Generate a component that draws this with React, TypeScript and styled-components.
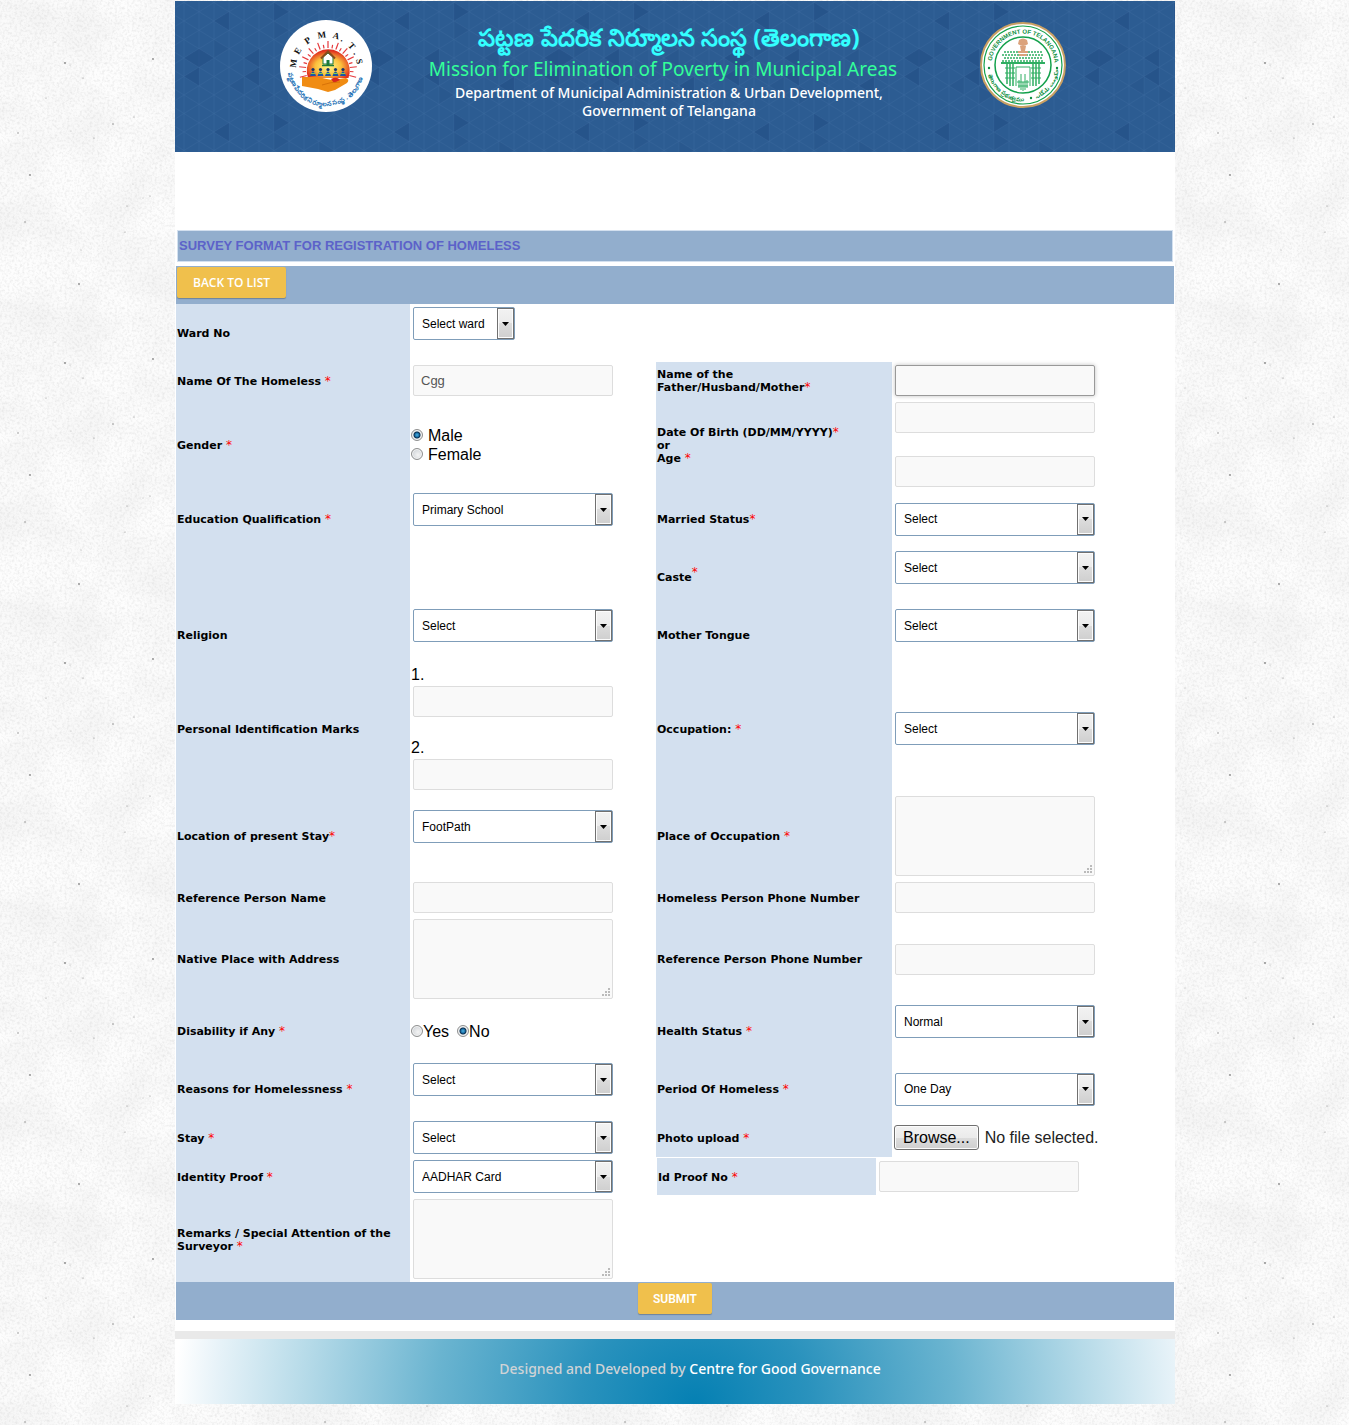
import React, { useRef, useState } from 'react';
import styled, { createGlobalStyle, css } from 'styled-components';

const svgUrl = (svg: string) => `url("data:image/svg+xml,${encodeURIComponent(svg)}")`;

const specks = [
  [65, 63], [70, 65], [83, 78], [18, 133], [94, 138], [71, 131], [30, 175], [133, 184], [127, 206],
  [25, 222], [125, 232], [81, 250], [79, 284], [140, 18], [134, 117], [113, 124], [46, 98], [55, 42],
  [153, 59], [143, 198], [150, 196], [215, 40], [240, 110], [262, 175], [228, 236], [285, 88], [205, 150],
];

const plaster = svgUrl(
  `<svg xmlns="http://www.w3.org/2000/svg" width="300" height="300">
    <filter id="a" x="0" y="0" width="100%" height="100%"><feTurbulence type="fractalNoise" baseFrequency=".02" numOctaves="5" seed="8" stitchTiles="stitch"/><feColorMatrix values="0 0 0 0 .5  0 0 0 0 .5  0 0 0 0 .5  .25 0 0 0 -.08"/></filter>
    <filter id="b" x="0" y="0" width="100%" height="100%"><feTurbulence type="fractalNoise" baseFrequency=".4" numOctaves="3" seed="3" stitchTiles="stitch"/><feColorMatrix values="0 0 0 0 .45  0 0 0 0 .45  0 0 0 0 .45  .5 0 0 0 -.21"/></filter>
    <rect width="300" height="300" fill="#fdfdfd"/>
    <rect width="300" height="300" filter="url(#a)"/>
    <rect width="300" height="300" filter="url(#b)"/>
    ${specks.map(([x, y], i) => `<circle cx="${x}" cy="${y}" r="${i % 3 ? 0.6 : 0.9}" fill="#555" opacity="${i % 2 ? 0.4 : 0.7}"/>`).join('')}
  </svg>`,
);

const GlobalStyle = createGlobalStyle`
  *, *::before, *::after { box-sizing: border-box; }
  body {
    margin: 0;
    padding-left: 1px;
    background: #f6f6f6 ${plaster};
    font: 16px/19px "Liberation Sans", Arial, sans-serif;
    color: #000;
  }
`;

const leftTriangle = (x: number, y: number) => `M${x} ${y}l15 -9.250v18.500z`;
const rightTriangle = (x: number, y: number) => `M${x} ${y}l-15 -9.250v18.500z`;

const triangles = svgUrl(
  `<svg xmlns="http://www.w3.org/2000/svg" width="180" height="111">
    <g fill="none" stroke="#3a689d" stroke-opacity=".45">
      ${Array.from({ length: 12 }, (_, i) => `<path d="M${9 + i * 15} 0V111"/>`).join('')}
      ${Array.from({ length: 21 }, (_, i) => {
        const y = 57 + (i - 10) * 18.5;
        return `<path d="M-6 ${y - 9.25}L189 ${y + 111}M-6 ${y + 9.25}L189 ${y - 111}"/>`;
      }).join('')}
    </g>
    <g fill="#1f4a80" fill-opacity=".45">
      <path d="${leftTriangle(9, 57)}${rightTriangle(39, 57)}${leftTriangle(9, 75.5)}${leftTriangle(39, 20)}${leftTriangle(69, 57)}${leftTriangle(69, 75.5)}${rightTriangle(114, 10.75)}${leftTriangle(144, 84.75)}"/>
    </g>
    <g fill="#1f4a80" fill-opacity=".22">
      <path d="${leftTriangle(54, 84.75)}${rightTriangle(54, 47.75)}${rightTriangle(114, 29.25)}${leftTriangle(129, 57)}${rightTriangle(159, 38.5)}${rightTriangle(99, 94)}"/>
    </g>
  </svg>`,
);

const Page = styled.div`
  max-width: 1000px;
  margin: 0 auto;
  padding: 1px 0 21px;
`;

const Banner = styled.header`
  display: grid;
  grid-template-columns: 302px minmax(0, 1fr) 302px;
  justify-items: center;
  align-items: start;
  height: 151px;
  padding-top: 19px;
  background: #2c5c92 ${triangles};
`;

const Headings = styled.div`
  display: flex;
  flex-direction: column;
  align-items: center;
  margin-right: 24px;
  white-space: nowrap;
  font-family: "Noto Sans", "Open Sans", sans-serif;
`;

const TeluguName = styled.h1`
  margin: 0 0 0 12px;
  font-size: 24px;
  line-height: 34px;
  font-weight: 700;
  color: #3ff;
`;

const EnglishName = styled.h2`
  margin: 0;
  font-size: 19px;
  line-height: 30px;
  font-weight: 400;
  color: #33ff99;
`;

const Department = styled.p`
  margin: 0 0 0 12px;
  font-size: 14px;
  line-height: 18px;
  font-weight: 500;
  text-align: center;
  color: #fff;
`;

const Sheet = styled.main`
  padding: 78px 1px 11px;
  background: #fff;
`;

const Title = styled.h3`
  margin: 0 1px 4px;
  padding: 0 1px;
  border: 1px solid #d3e0ef;
  background: #92aecd;
  font-size: 13px;
  line-height: 30px;
  font-weight: 700;
  color: #5c62c9;
`;

const Bar = styled.div<{ $center?: boolean }>`
  display: flex;
  justify-content: ${(p) => (p.$center ? 'center' : 'flex-start')};
  align-items: flex-start;
  height: 38px;
  padding: 1px;
  background: #92aecd;
`;

const ActionButton = styled.button<{ $wide?: boolean }>`
  height: 31px;
  padding: 1px ${(p) => (p.$wide ? 16 : 15)}px 0;
  border: 0;
  border-radius: 2px;
  background: #f0c04c;
  box-shadow: 0 1px 1px rgba(0, 0, 0, 0.25);
  font: 12px/30px ${(p) => (p.$wide ? '"Open Sans"' : 'Roboto')}, sans-serif;
  font-weight: 600;
  color: #fff;
`;

const FormGrid = styled.div`
  display: grid;
  grid-template-columns: minmax(0, 234fr) minmax(0, 246fr) minmax(0, 236fr) minmax(0, 282fr);
`;

const LabelCell = styled.div`
  display: flex;
  align-items: center;
  padding: 2px 1px 1px;
  background: #d3e0ef;
  font: 700 11px/13px "DejaVu Sans", Verdana, sans-serif;
`;

const ControlCell = styled.div<{ $spaced?: boolean }>`
  display: flex;
  flex-direction: column;
  justify-content: center;
  align-items: flex-start;
  padding: 1px 1px ${(p) => (p.$spaced ? 20 : 1)}px;
`;

const Star = styled.span<{ $raised?: boolean }>`
  font-size: 12px;
  line-height: 0;
  font-weight: 400;
  color: #f00;
  ${(p) => p.$raised && css`vertical-align: super;`}
`;

const field = css`
  display: block;
  width: 200px;
  margin: 2px;
  border: 1px solid #ddd;
  border-radius: 2px;
  background: #f9f9f9;
  font: 13px/18px "Liberation Sans", Arial, sans-serif;
  color: #555;
  outline: 0;
`;

const TextInput = styled.input<{ $active?: boolean }>`
  ${field}
  height: 31px;
  padding: 0 7px;
  ${(p) => p.$active && css`
    border-color: #999;
    box-shadow: 0 0 4px rgba(0, 0, 0, 0.25);
  `}
`;

const TextArea = styled.textarea`
  ${field}
  height: 80px;
  padding: 7px;
  resize: none;
`;

const AreaBox = styled.div`
  display: grid;
  svg {
    grid-area: 1 / 1;
    place-self: end;
    margin: 5px;
    pointer-events: none;
  }
  textarea { grid-area: 1 / 1; }
`;

const SelectBox = styled.div<{ $short?: boolean }>`
  display: grid;
  width: ${(p) => (p.$short ? 102 : 200)}px;
  height: 33px;
  margin: 2px;
`;

const NativeSelect = styled.select`
  grid-area: 1 / 1;
  appearance: none;
  margin: 0;
  padding: 0 20px 0 8px;
  border: 1px solid #7f9db9;
  border-radius: 2px;
  background: #fff;
  font: 12px/18px "Liberation Sans", Arial, sans-serif;
  color: #000;
  outline: 0;
`;

const Arrow = styled.span`
  grid-area: 1 / 1;
  place-self: stretch end;
  display: grid;
  place-items: center;
  width: 17px;
  margin: 1px;
  border: 1px solid #707070;
  background: linear-gradient(#f2f2f2, #ebebeb 50%, #dcdcdc 50%, #cfcfcf);
  box-shadow: inset 0 0 0 1px #fcfcfc;
  pointer-events: none;
`;

const RadioGroup = styled.div<{ $row?: boolean }>`
  display: flex;
  flex-direction: ${(p) => (p.$row ? 'row' : 'column')};
  gap: ${(p) => (p.$row ? 8 : 0)}px;
`;

const RadioLabel = styled.label<{ $tight?: boolean }>`
  display: flex;
  align-items: center;
  gap: ${(p) => (p.$tight ? 0 : 5)}px;
  line-height: 19px;
`;

const Radio = styled.input`
  appearance: none;
  width: 12px;
  height: 12px;
  margin: 0;
  border: 1px solid #8e8f8f;
  border-radius: 50%;
  background: radial-gradient(circle at 60% 60%, #f4f4f4, #c5cacf);
  box-shadow: inset 0 0 0 1px #f4f4f4;
  &:checked {
    background: radial-gradient(circle at 50% 50%, #4fb4e0 0, #1a6fa8 2px, #0b2e4d 3px, #dfe3e6 4px);
  }
`;

const Marks = styled.ol`
  display: grid;
  gap: 19px;
  margin: 0;
  padding: 0;
  list-style: none;
  label { display: block; }
`;

const FileRow = styled.div`
  display: flex;
  align-items: center;
  gap: 6px;
  padding-left: 1px;
  white-space: nowrap;
  color: #222;
`;

const BrowseButton = styled.button`
  height: 25px;
  padding: 0 8px;
  border: 1px solid #707070;
  border-radius: 3px;
  background: linear-gradient(#f2f2f2, #ebebeb 50%, #dddddd 50%, #cfcfcf);
  box-shadow: inset 0 0 0 1px #fcfcfc;
  font: 16px/20px "Liberation Sans", Arial, sans-serif;
  color: #000;
`;

const HiddenFile = styled.input`
  position: absolute;
  width: 1px;
  height: 1px;
  opacity: 0;
  pointer-events: none;
`;

const ProofBlock = styled.div`
  grid-column: span 2;
  display: grid;
  grid-template-columns: 219px minmax(0, 1fr);
  padding: 1px;
`;

const Rule = styled.div`
  height: 8px;
  background: #e9e9e9;
`;

const Footer = styled.footer`
  height: 65px;
  padding-left: 30px;
  background: radial-gradient(ellipse 520px 480px at 52% 100%, #0580b3, #2a92bd 22%, #6ab4d0 50%, #b5dae8 75%, #e6f2f8 92%, #fff);
  font: 500 14px/60px "Noto Sans", "Open Sans", sans-serif;
  text-align: center;
  color: #cfd3d6;
  a {
    color: #fff;
    text-decoration: none;
  }
`;

const LogoSvg = styled.svg`
  display: block;
`;

const SealSvg = styled(LogoSvg)`
  margin: 2px 2px 0 0;
`;

function MepmaLogo() {
  const rays = Array.from({ length: 21 }, (_, i) => Math.PI * (1.08 - (i * 1.16) / 20));
  return (
    <LogoSvg width="92" height="92" viewBox="0 0 92 92" role="img" aria-label="MEPMA T.S">
      <defs>
        <radialGradient id="sun" cx="50%" cy="60%" r="55%">
          <stop offset="0" stopColor="#fff68a" />
          <stop offset=".55" stopColor="#fbc03c" />
          <stop offset="1" stopColor="#e0301e" />
        </radialGradient>
        <path id="mepmaTop" d="M16 48A30.500 30.500 0 0 1 77 48" />
        <path id="mepmaLow" d="M8 48A38 38 0 0 0 84 48" />
      </defs>
      <circle cx="46" cy="46" r="46" fill="#fff" />
      {rays.map((a, i) => {
        const outer = i % 2 ? 25.5 : 29;
        return (
          <line
            key={a}
            x1={48 + 22 * Math.cos(a)}
            y1={50 - 22 * Math.sin(a)}
            x2={48 + outer * Math.cos(a)}
            y2={50 - outer * Math.sin(a)}
            stroke="#e5383b"
            strokeWidth="1.200"
          />
        );
      })}
      <path d="M28 58A21.500 21.500 0 1 1 68.500 58Z" fill="url(#sun)" />
      <path d="M43 37L48 33L53 37V44H43Z" fill="#fff" stroke="#1b7a3a" />
      <path d="M46.500 40H49.500V45H46.500Z" fill="#1b7a3a" />
      <path d="M41 38.500L48 31.500L55 38.500" fill="none" stroke="#8a4b1c" strokeWidth="2" />
      <path d="M42 45.500H54" stroke="#1b7a3a" strokeWidth="1.500" />
      {[33, 40.5, 48, 55.5, 63].map((x) => (
        <g key={x}>
          <circle cx={x} cy="49.500" r="1.600" fill="#14336b" />
          <path d={`M${x - 3} 56Q${x} 47 ${x + 3} 56Z`} fill="#1a56a5" />
          <path d={`M${x - 2} 53.5H${x + 2}`} stroke="#8fce3c" />
        </g>
      ))}
      <path d="M22 57L38 57Q46 59 52 60L66 58Q70 60 67 63L55 70L48 72L38 69L22 66Z" fill="#f08c13" />
      <path d="M51 59Q57 56 60 60L54 63Z" fill="#d7261e" />
      <path d="M42 65Q50 62 60 62" fill="none" stroke="#d87208" />
      <text fontFamily="Liberation Serif, serif" fontWeight="700" fontSize="9" fill="#111">
        {['M', 'E', 'P', 'M', 'A', '.', 'T', '.', 'S'].map((c, i) => (
          <textPath key={i} href="#mepmaTop" startOffset={`${[0, 14, 28, 41, 56, 65, 74, 84, 91][i]}%`}>
            {c}
          </textPath>
        ))}
      </text>
      <text fontFamily="Noto Sans, sans-serif" fontWeight="700" fontSize="6.500" fill="#1a6fb5">
        <textPath href="#mepmaLow" startOffset="4%">పట్టణ పేదరిక నిర్మూలన సంస్థ . తెలంగాణ</textPath>
      </text>
    </LogoSvg>
  );
}

function TelanganaSeal() {
  return (
    <SealSvg width="86" height="86" viewBox="0 0 86 86" role="img" aria-label="Government of Telangana">
      <defs>
        <path id="sealTop" d="M11.500 43A31.500 31.500 0 0 1 74.500 43" />
        <path id="sealLow" d="M7 43A36 36 0 0 0 79 43" />
      </defs>
      <circle cx="43" cy="43" r="42" fill="#fff" stroke="#c9a063" strokeWidth="2" />
      <circle cx="43" cy="43" r="39" fill="none" stroke="#12a04b" strokeWidth="1.200" />
      <circle cx="43" cy="43" r="28" fill="none" stroke="#12a04b" strokeWidth="1.500" />
      <g fill="none" stroke="#2fae62">
        <path d="M24 30H62M22 33H64M24 36H62M22 39H64" strokeDasharray="2 1" strokeWidth="1.500" />
        <path d="M21 41H65" strokeWidth="2" />
        <path d="M27 41V62M30 41V64M33 41V64M53 41V64M56 41V64M59 41V62" strokeWidth="1.500" />
        <path d="M25 46H35M25 51H35M25 56H35M51 46H61M51 51H61M51 56H61" />
        <path d="M36 64V45H50V64" />
        <path d="M39 66V58M41 68V52M43 69V60M45 68V52M47 66V58M37 60H49M38 64H48" />
      </g>
      <g fill="#dba27c">
        <path d="M39 18Q43 15 47 18L48 22Q43 26 38 22Z" />
        <path d="M40 24H46L45 29H48V31H38V29H41Z" />
        <path d="M39 32H47V34H39Z" />
      </g>
      <text fontFamily="Liberation Sans, sans-serif" fontWeight="700" fontSize="6" fill="#0e8f42">
        <textPath href="#sealTop" startOffset="4%">GOVERNMENT OF TELANGANA</textPath>
      </text>
      <text fontFamily="Noto Sans, sans-serif" fontWeight="700" fontSize="5.500" fill="#0e8f42">
        <textPath href="#sealLow" startOffset="9%">తెలంగాణ ప్రభుత్వము</textPath>
      </text>
      <text fontFamily="DejaVu Sans, sans-serif" fontWeight="700" fontSize="5.500" fill="#0e8f42">
        <textPath href="#sealLow" startOffset="62%">حکومت تلنگانہ</textPath>
      </text>
      <g fill="#0e8f42">
        <circle cx="9" cy="46" r="1.200" />
        <circle cx="77" cy="46" r="1.200" />
        <circle cx="51" cy="76" r="1.200" />
      </g>
    </SealSvg>
  );
}

type Required = 'spaced' | 'joined' | 'raised';

function FieldLabel({ id, text, star }: { id: string; text: string; star?: Required }) {
  return (
    <LabelCell>
      <label htmlFor={id} id={`${id}-label`}>
        {text}
        {star === 'spaced' && ' '}
        {star && <Star $raised={star === 'raised'}>*</Star>}
      </label>
    </LabelCell>
  );
}

function Dropdown({ id, value, short }: { id: string; value: string; short?: boolean }) {
  return (
    <SelectBox $short={short}>
      <NativeSelect id={id} defaultValue={value}>
        <option>{value}</option>
      </NativeSelect>
      <Arrow>
        <svg width="7" height="4" viewBox="0 0 7 4" aria-hidden="true">
          <path d="M0 0H7L3.500 4Z" />
        </svg>
      </Arrow>
    </SelectBox>
  );
}

function Area({ id }: { id: string }) {
  return (
    <AreaBox>
      <TextArea id={id} />
      <svg width="8" height="8" viewBox="0 0 8 8" fill="#bbb" aria-hidden="true">
        <path d="M6 0h2v2h-2zM3 3h2v2h-2zM6 3h2v2h-2zM0 6h2v2h-2zM3 6h2v2h-2zM6 6h2v2h-2z" />
      </svg>
    </AreaBox>
  );
}

function Choice({ id, options, value, row }: { id: string; options: string[]; value: string; row?: boolean }) {
  return (
    <RadioGroup $row={row} role="radiogroup" aria-labelledby={`${id}-label`}>
      {options.map((o, i) => (
        <RadioLabel key={o} $tight={row}>
          <Radio type="radio" id={i === 0 ? id : undefined} name={id} defaultChecked={o === value} />
          {o}
        </RadioLabel>
      ))}
    </RadioGroup>
  );
}

function PhotoUpload({ id }: { id: string }) {
  const ref = useRef<HTMLInputElement>(null);
  const [name, setName] = useState('No file selected.');
  return (
    <FileRow>
      <BrowseButton type="button" onClick={() => ref.current?.click()}>Browse...</BrowseButton>
      <span>{name}</span>
      <HiddenFile
        ref={ref}
        id={id}
        type="file"
        tabIndex={-1}
        onChange={(e) => setName(e.target.files?.[0]?.name ?? 'No file selected.')}
      />
    </FileRow>
  );
}

export default function App() {
  return (
    <>
      <GlobalStyle />
      <Page>
        <Banner>
          <MepmaLogo />
          <Headings>
            <TeluguName>పట్టణ పేదరిక నిర్మూలన సంస్థ (తెలంగాణ)</TeluguName>
            <EnglishName>Mission for Elimination of Poverty in Municipal Areas</EnglishName>
            <Department>
              Department of Municipal Administration &amp; Urban Development,
              <br />
              Government of Telangana
            </Department>
          </Headings>
          <TelanganaSeal />
        </Banner>
        <Sheet>
          <Title>SURVEY FORMAT FOR REGISTRATION OF HOMELESS</Title>
          <form onSubmit={(e) => e.preventDefault()}>
            <Bar>
              <ActionButton type="button" $wide>BACK TO LIST</ActionButton>
            </Bar>
            <FormGrid>
              <FieldLabel id="ward" text="Ward No" />
              <ControlCell $spaced><Dropdown id="ward" value="Select ward" short /></ControlCell>
              <div />
              <div />

              <FieldLabel id="name" text="Name Of The Homeless" star="spaced" />
              <ControlCell><TextInput id="name" defaultValue="Cgg" /></ControlCell>
              <LabelCell>
                <label htmlFor="parent">Name of the<br />Father/Husband/Mother<Star>*</Star></label>
              </LabelCell>
              <ControlCell><TextInput id="parent" $active /></ControlCell>

              <FieldLabel id="gender" text="Gender" star="spaced" />
              <ControlCell><Choice id="gender" options={['Male', 'Female']} value="Male" /></ControlCell>
              <LabelCell>
                <div>
                  <label htmlFor="dob">Date Of Birth (DD/MM/YYYY)<Star>*</Star></label>
                  <br />or<br />
                  <label htmlFor="age">Age <Star>*</Star></label>
                </div>
              </LabelCell>
              <ControlCell>
                <TextInput id="dob" />
                <br />
                <TextInput id="age" />
              </ControlCell>

              <FieldLabel id="education" text="Education Qualification" star="spaced" />
              <ControlCell $spaced><Dropdown id="education" value="Primary School" /></ControlCell>
              <FieldLabel id="married" text="Married Status" star="joined" />
              <ControlCell><Dropdown id="married" value="Select" /></ControlCell>

              <LabelCell />
              <div />
              <FieldLabel id="caste" text="Caste" star="raised" />
              <ControlCell $spaced><Dropdown id="caste" value="Select" /></ControlCell>

              <FieldLabel id="religion" text="Religion" />
              <ControlCell $spaced><Dropdown id="religion" value="Select" /></ControlCell>
              <FieldLabel id="tongue" text="Mother Tongue" />
              <ControlCell $spaced><Dropdown id="tongue" value="Select" /></ControlCell>

              <FieldLabel id="mark1" text="Personal Identification Marks" />
              <ControlCell>
                <Marks>
                  <li><label htmlFor="mark1">1.</label><TextInput id="mark1" /></li>
                  <li><label htmlFor="mark2">2.</label><TextInput id="mark2" /></li>
                </Marks>
              </ControlCell>
              <FieldLabel id="occupation" text="Occupation:" star="spaced" />
              <ControlCell><Dropdown id="occupation" value="Select" /></ControlCell>

              <FieldLabel id="location" text="Location of present Stay" star="joined" />
              <ControlCell $spaced><Dropdown id="location" value="FootPath" /></ControlCell>
              <FieldLabel id="place" text="Place of Occupation" star="spaced" />
              <ControlCell><Area id="place" /></ControlCell>

              <FieldLabel id="refname" text="Reference Person Name" />
              <ControlCell><TextInput id="refname" /></ControlCell>
              <FieldLabel id="phone" text="Homeless Person Phone Number" />
              <ControlCell><TextInput id="phone" /></ControlCell>

              <FieldLabel id="native" text="Native Place with Address" />
              <ControlCell><Area id="native" /></ControlCell>
              <FieldLabel id="refphone" text="Reference Person Phone Number" />
              <ControlCell><TextInput id="refphone" /></ControlCell>

              <FieldLabel id="disability" text="Disability if Any" star="spaced" />
              <ControlCell><Choice id="disability" options={['Yes', 'No']} value="No" row /></ControlCell>
              <FieldLabel id="health" text="Health Status" star="spaced" />
              <ControlCell $spaced><Dropdown id="health" value="Normal" /></ControlCell>

              <FieldLabel id="reasons" text="Reasons for Homelessness" star="spaced" />
              <ControlCell $spaced><Dropdown id="reasons" value="Select" /></ControlCell>
              <FieldLabel id="period" text="Period Of Homeless" star="spaced" />
              <ControlCell><Dropdown id="period" value="One Day" /></ControlCell>

              <FieldLabel id="stay" text="Stay" star="spaced" />
              <ControlCell><Dropdown id="stay" value="Select" /></ControlCell>
              <FieldLabel id="photo" text="Photo upload" star="spaced" />
              <ControlCell><PhotoUpload id="photo" /></ControlCell>

              <FieldLabel id="proof" text="Identity Proof" star="spaced" />
              <ControlCell><Dropdown id="proof" value="AADHAR Card" /></ControlCell>
              <ProofBlock>
                <FieldLabel id="proofno" text="Id Proof No" star="spaced" />
                <ControlCell><TextInput id="proofno" /></ControlCell>
              </ProofBlock>

              <FieldLabel id="remarks" text="Remarks / Special Attention of the Surveyor" star="spaced" />
              <ControlCell><Area id="remarks" /></ControlCell>
            </FormGrid>
            <Bar $center>
              <ActionButton type="submit">SUBMIT</ActionButton>
            </Bar>
          </form>
        </Sheet>
        <Rule />
        <Footer>Designed and Developed by <a href="#cgg">Centre for Good Governance</a></Footer>
      </Page>
    </>
  );
}
